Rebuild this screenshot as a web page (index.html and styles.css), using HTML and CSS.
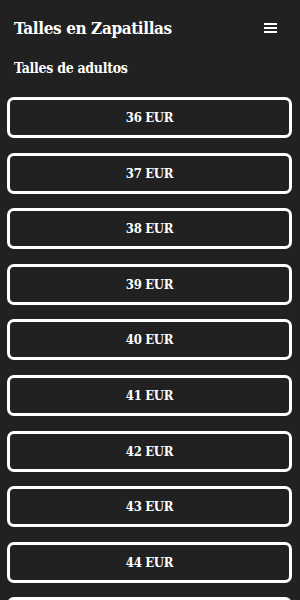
FILE: index.html
```html
<!DOCTYPE html>
<html lang="es">
<head>
    <meta charset="UTF-8">
    <meta name="viewport" content="width=device-width, initial-scale=1.0">
    <title>Talles en Zapatillas</title>
    <link rel="stylesheet" href="styles.css">
</head>
<body>
    <header class="topbar">
        <h1 class="title">Talles en Zapatillas</h1>
        <button class="menu" aria-label="Menu">
            <svg width="13" height="10" viewBox="0 0 13 10">
                <rect x="0" y="0" width="13" height="2" fill="#fff"/>
                <rect x="0" y="4" width="13" height="2" fill="#fff"/>
                <rect x="0" y="8" width="13" height="2" fill="#fff"/>
            </svg>
        </button>
    </header>

    <h2 class="subtitle">Talles de adultos</h2>

    <div class="sizes">
        <button class="size">36 EUR</button>
        <button class="size">37 EUR</button>
        <button class="size">38 EUR</button>
        <button class="size">39 EUR</button>
        <button class="size">40 EUR</button>
        <button class="size">41 EUR</button>
        <button class="size">42 EUR</button>
        <button class="size">43 EUR</button>
        <button class="size">44 EUR</button>
        <button class="size">45 EUR</button>
        <button class="size">46 EUR</button>
        <button class="size">47 EUR</button>
    </div>
</body>
</html>
```

FILE: styles.css
```css
body {
    margin: 0;
    background-color: #212121;
    color: white;
    font-family: "Roboto Slab", "DejaVu Serif", serif;
    font-stretch: condensed;
}
.topbar {
    display: flex;
    align-items: center;
    justify-content: space-between;
    height: 56px;
    padding: 0 23px 0 14px;
}
.title {
    margin: 0;
    font-size: 17px;
    letter-spacing: -0.4px;
    font-weight: bold;
}
.menu {
    background: none;
    border: none;
    padding: 0;
    display: flex;
    cursor: pointer;
}
.subtitle {
    margin: 4px 0 21px 14px;
    font-size: 14px;
    letter-spacing: -0.3px;
    font-weight: bold;
}
.sizes {
    display: flex;
    flex-direction: column;
    gap: 14.6px;
    padding: 0 8px 0 7px;
}
.size {
    height: 41px;
    background-color: #212121;
    color: white;
    border: 3px solid white;
    border-radius: 7px;
    font-family: inherit;
    font-stretch: inherit;
    font-size: 13px;
    letter-spacing: -0.3px;
    font-weight: bold;
    cursor: pointer;
}
```
